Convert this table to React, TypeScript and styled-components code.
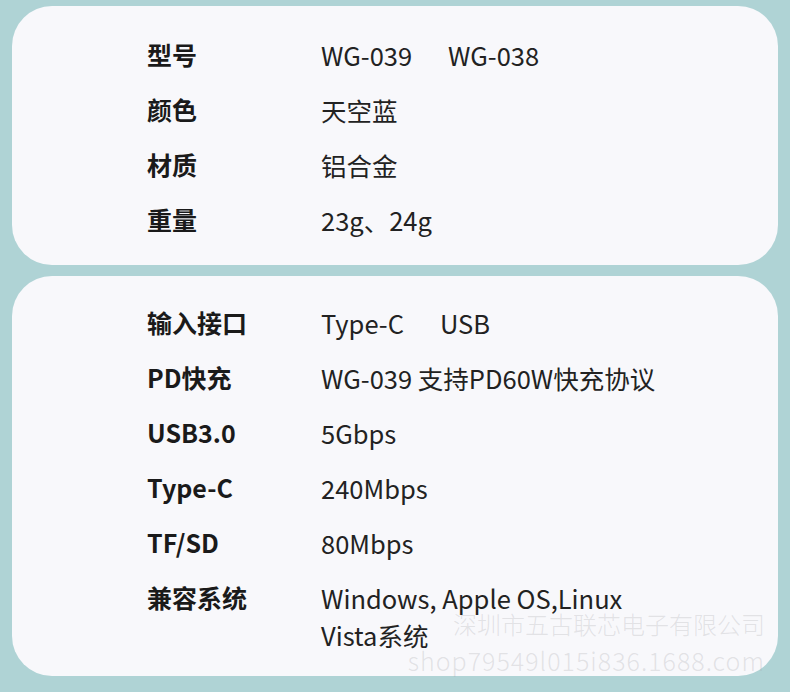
import React from 'react'
import styled, { createGlobalStyle } from 'styled-components'

const GlobalStyle = createGlobalStyle`
  html, body {
    margin: 0;
    padding: 0;
    background: #afd3d5;
  }
  body {
    font-family: "Noto Sans CJK SC", "Noto Sans", sans-serif;
  }
`

type SpecItem = {
  label: string,
  values: string[],
  lines?: string[],
}

const basicSpecs: SpecItem[] = [
  { label: '型号', values: ['WG-039', 'WG-038'] },
  { label: '颜色', values: ['天空蓝'] },
  { label: '材质', values: ['铝合金'] },
  { label: '重量', values: ['23g、24g'] },
]

const portSpecs: SpecItem[] = [
  { label: '输入接口', values: ['Type-C', 'USB'] },
  { label: 'PD快充', values: ['WG-039 支持PD60W快充协议'] },
  { label: 'USB3.0', values: ['5Gbps'] },
  { label: 'Type-C', values: ['240Mbps'] },
  { label: 'TF/SD', values: ['80Mbps'] },
  { label: '兼容系统', values: [], lines: ['Windows, Apple OS,Linux', 'Vista系统'] },
]

const Page = styled.div`
  width: 790px;
  height: 692px;
  box-sizing: border-box;
  padding: 6px 12px 0 12px;
  display: flex;
  flex-direction: column;
  gap: 11px;
`

const Card = styled.div<{ $padTop: number, $padBottom: number }>`
  position: relative;
  background: #f8f8fb;
  border-radius: 40px;
  padding: ${p => p.$padTop}px 0 ${p => p.$padBottom}px 135px;
  display: flex;
  flex-direction: column;
  gap: 18px;
`

const Row = styled.div`
  display: grid;
  grid-template-columns: 174px 1fr;
  line-height: 37px;
`

const Label = styled.div`
  font-size: 25px;
  font-weight: 700;
  color: #1a1a1a;
`

const Value = styled.div`
  display: flex;
  gap: 36px;
  font-size: 25.5px;
  color: #222222;
  font-weight: 400;
`

const Lines = styled.div`
  display: flex;
  flex-direction: column;
  font-size: 25.5px;
  color: #222222;
`

const Watermark = styled.div`
  position: absolute;
  right: 13px;
  top: 330px;
  text-align: right;
  font-size: 24px;
  line-height: 36px;
  font-weight: 300;
  color: rgba(160, 160, 165, 0.26);
  white-space: nowrap;
  pointer-events: none;
`

const WatermarkUrl = styled.div`
  font-size: 25px;
  letter-spacing: 1px;
`

function SpecRow({ item }: { item: SpecItem }) {
  return (
    <Row>
      <Label>{item.label}</Label>
      {item.lines ? (
        <Lines>
          {item.lines.map(line => <span key={line}>{line}</span>)}
        </Lines>
      ) : (
        <Value>
          {item.values.map(v => <span key={v}>{v}</span>)}
        </Value>
      )}
    </Row>
  )
}

export default function App() {
  return (
    <>
      <GlobalStyle />
      <Page>
        <Card $padTop={30} $padBottom={27}>
          {basicSpecs.map(item => <SpecRow key={item.label} item={item} />)}
        </Card>
        <Card $padTop={28} $padBottom={23}>
          {portSpecs.map(item => <SpecRow key={item.label} item={item} />)}
          <Watermark>
            <div>深圳市五古联芯电子有限公司</div>
            <WatermarkUrl>shop79549l015i836.1688.com</WatermarkUrl>
          </Watermark>
        </Card>
      </Page>
    </>
  )
}
